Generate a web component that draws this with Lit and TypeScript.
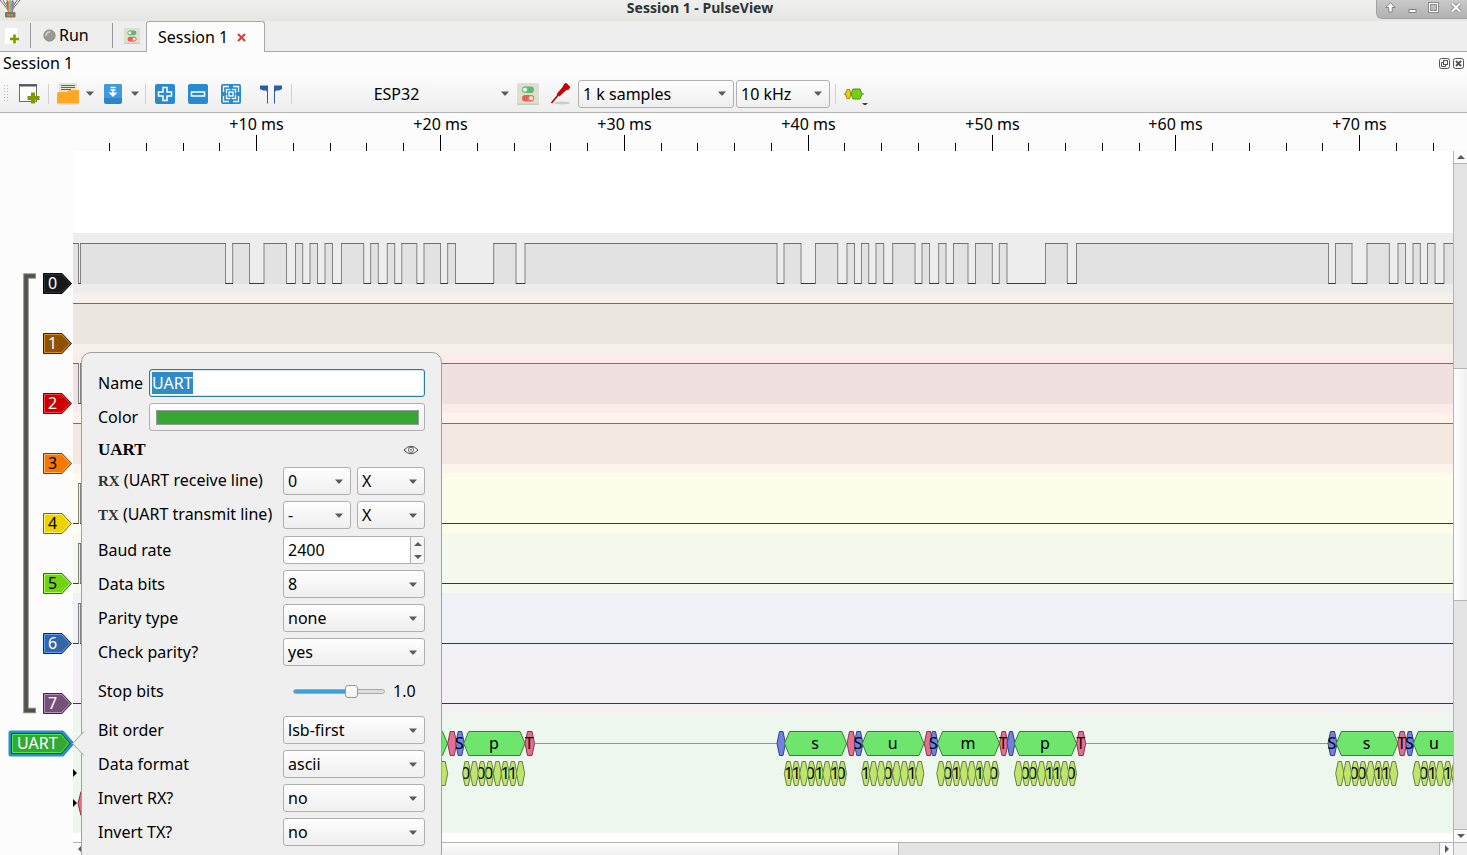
import { LitElement, html, svg, css } from "lit";
import { customElement } from "lit/decorators.js";

const HEADER_WIDTH = 73;
const SCENE_TOP = 151;

type Channel = {
  name: string;
  color: string;
  edge: string;
  light: string;
  text: string;
  start: number;
  edges: number[];
};

// Sample positions at which channel 0 toggles, beginning high.
const UART_EDGES = [
  78.5, 80.5,
  225.5, 232.7, 249.5, 264, 286.5, 295.5, 302.7, 310, 317.5, 325, 332.5, 341.5, 363.7, 370.7, 378.3, 387.3, 394.7,
  401.8, 416.8, 424, 440.5, 447.7, 455.5, 493.7, 516, 525,
  777, 784, 801, 815.5, 837.7, 847, 854.5, 861.5, 868.7, 876, 883.7, 892.7, 915, 922, 929.5, 938.7, 946, 953.5, 968,
  975.5, 992.3, 999.3, 1007, 1045.5, 1067.3, 1076.5,
  1328.5, 1335.5, 1352, 1367, 1389.3, 1398, 1405.5, 1413, 1420.3, 1427.5, 1435, 1444,
];
const GLITCH = [78.5, 80.5];

const CHANNELS: Channel[] = [
  { name: "0", color: "#16191a", edge: "#000000", light: "#2e3436", text: "#fff", start: 1, edges: UART_EDGES },
  { name: "1", color: "#8f5202", edge: "#3c2200", light: "#e08a1a", text: "#fff", start: 1, edges: [] },
  { name: "2", color: "#cc0000", edge: "#6a0000", light: "#ff4040", text: "#fff", start: 1, edges: GLITCH },
  { name: "3", color: "#f57900", edge: "#7a3c00", light: "#ffb066", text: "#000", start: 1, edges: [] },
  { name: "4", color: "#edd400", edge: "#766a00", light: "#fff27a", text: "#000", start: 0, edges: GLITCH },
  { name: "5", color: "#73d216", edge: "#39690b", light: "#a8ff55", text: "#000", start: 0, edges: GLITCH },
  { name: "6", color: "#3465a4", edge: "#152a48", light: "#5aa0ff", text: "#fff", start: 0, edges: GLITCH },
  { name: "7", color: "#75507b", edge: "#3a283d", light: "#b98cc0", text: "#fff", start: 0, edges: [] },
];

type Ann = [number, number, "start" | "data" | "stop", string];
const FRAMES: Ann[] = [
  [386, 447.5, "data", ""],
  [447.7, 456.7, "stop", ""], [455.7, 464.3, "start", "S"], [463.7, 525, "data", "p"], [525, 534.5, "stop", "T"],
  [777, 785.5, "start", ""], [784.5, 846.7, "data", "s"], [847, 855.7, "stop", ""], [854.3, 863, "start", "S"],
  [862.3, 924, "data", "u"], [924.3, 933, "stop", ""], [929.8, 938, "start", "S"], [937.5, 999.5, "data", "m"],
  [999.5, 1008, "stop", "T"], [1007, 1015, "start", ""], [1014.3, 1076.5, "data", "p"], [1076.5, 1085.7, "stop", "T"],
  [1328, 1337, "start", "S"], [1336.3, 1398, "data", "s"], [1397.7, 1406.7, "stop", "T"], [1405.7, 1414, "start", "S"],
  [1413.3, 1475, "data", ""],
];
const FILL = { start: "#6e82e4", data: "#6ee66e", stop: "#e66e96" };
const STROKE = { start: "#37417a", data: "#378037", stop: "#80374b" };

const BITS: [number, string][] = [
  [385.5, "        "],
  [462.5, "0 00 11 "],
  [784.3, "11 01 10"],
  [861.7, "1  0  1 "],
  [936.8, " 01  1 0"],
  [1014.3, " 00 11 0"],
  [1335.7, "  00 11 "],
  [1412.8, " 01 1   "],
];

const hex = (x0: number, x1: number, y: number, tip: number) =>
  `${x0},${y} ${x0 + tip},${y - 12} ${x1 - tip},${y - 12} ${x1},${y} ${x1 - tip},${y + 12} ${x0 + tip},${y + 12}`;

const caret = html`<svg class="caret" width="8" height="5" viewBox="0 0 8 5" aria-hidden="true"><path d="M0 .5h8L4.5 4.5h-1z" fill="#5a5a5a"/></svg>`;

const configIcon = (size: number) => html`<svg width=${size} height=${size} viewBox="0 0 22 22" aria-hidden="true">
  <rect width="22" height="22" rx="1.5" fill="#dfdfd0"/><rect y="20.500" width="22" height="1.500" fill="#cbcbbb"/>
  <rect x="5" y="3.500" width="12" height="6.500" rx="3.200" fill="#5fb878"/><circle cx="8" cy="6.700" r="2.600" fill="#f3f3ec" stroke="#5fb878"/>
  <rect x="5" y="12" width="12" height="6.500" rx="3.200" fill="#ef5f55"/><circle cx="14" cy="15.200" r="2.600" fill="#f3f3ec" stroke="#ef5f55"/>
</svg>`;

@customElement("drop-down")
class DropDown extends LitElement {
  static properties = { label: {}, value: {} };
  declare label: string;
  declare value: string;
  static styles = css`
    :host { display: block; }
    .box { display: grid; align-items: center; }
    select, .caret { grid-area: 1 / 1; }
    select {
      appearance: none; width: 100%; height: 28px; margin: 0; padding: 0 16px 0 4px;
      font: 16px/22px "Noto Sans", sans-serif; color: #000;
      border: 1px solid #b0b0b0; border-radius: 3px;
      background: linear-gradient(#fefefe, #efefef); outline: none;
    }
    .caret { justify-self: end; margin-right: 8px; pointer-events: none; }
  `;
  render() {
    return html`<div class="box"><select aria-label=${this.label}><option>${this.value}</option></select>${caret}</div>`;
  }
}

@customElement("trace-view")
class TraceView extends LitElement {
  static styles = css`
    :host { display: block; overflow: hidden; background: #fff; padding-top: 82px; }
    .lane { height: 60px; }
    .decoder { height: 120px; background: #eef7ee; }
    svg { display: block; width: 100%; height: 100%; }
    text { font: 16px "Noto Sans", sans-serif; text-anchor: middle; }
  `;

  private lane(c: Channel) {
    const stops = [HEADER_WIDTH, ...c.edges, 4000];
    return html`<div class="lane" style="background:${c.color}14"><svg aria-hidden="true"><g transform="translate(${-HEADER_WIDTH},0)">
      ${stops.slice(1).map((x1, i) => {
        const x0 = stops[i];
        const high = (i % 2 === 0) === (c.start === 1);
        return high
          ? svg`<rect x=${x0} y="10" width=${x1 - x0} height="41" fill="#000" fill-opacity=".045"/>`
          : null;
      })}
      ${c.edges.map((x) => svg`<path d="M${x} 10V50" stroke="#828282"/>`)}
      ${stops.slice(1).map((x1, i) => {
        const high = (i % 2 === 0) === (c.start === 1);
        return svg`<path d=${`M${stops[i] - 0.3} ${high ? 10.5 : 50.5}H${x1 + 0.3}`} stroke=${high ? "#00c000" : "#c00000"}/>`;
      })}
    </g></svg></div>`;
  }

  private bit(x: number, ch: string) {
    if (ch === " ") return null;
    return svg`<svg x=${x + 1} y="46" width="7" height="28" overflow="hidden"><text x=${ch === "0" ? 2 : 3.2} y="20">${ch}</text></svg>`;
  }

  render() {
    return html`
      ${CHANNELS.map((c) => this.lane(c))}
      <div class="decoder"><svg role="img" aria-label="UART decoder"><g transform="translate(${-HEADER_WIDTH},0)">
        <path d="M535 30.500H777M1086 30.500H1328" stroke="#909890"/>
        <path d="M73 56v8l4-4zM73 86v8l4-4z" fill="#000"/>
        <polygon points=${hex(78, 86, 90.5, 3)} fill="#e66e7e" stroke="#80373f"/>
        ${FRAMES.map(([a, b, k, t]) => svg`<polygon points=${hex(a, b, 30.5, k === "data" ? 5 : 2.5)} fill=${FILL[k]} stroke=${STROKE[k]}/>
          ${t ? svg`<text x=${(a + b) / 2 - 0.5} y="36">${t}</text>` : null}`)}
        <text x="1434" y="36">u</text>
        ${BITS.map(([x, bits]) => svg`
          ${[...bits].map((_, i) => svg`<polygon points=${hex(x + i * 7.7, x + i * 7.7 + 8.3, 60.5, 2.5)} fill="#bee66e" stroke="#6a803e"/>`)}
          ${[...bits].map((ch, i) => this.bit(x + i * 7.7, ch))}`)}
      </g></svg></div>`;
  }
}

@customElement("trace-headers")
class TraceHeaders extends LitElement {
  static styles = css`
    :host { display: block; overflow: hidden; background: #fcfcfc; }
    svg { display: block; width: 100%; height: 704px; }
    text { font: 16px "Noto Sans", sans-serif; }
  `;
  render() {
    return html`<svg role="img" aria-label="Channels"><g transform="translate(0,${-SCENE_TOP})">
      <path d="M36 276H26V710.500H36" fill="none" stroke="#8c8e89" stroke-width="5.600"/>
      <path d="M35 276H26V710.500H35" fill="none" stroke="#50524e" stroke-width="3.600"/>
      ${CHANNELS.map((c, i) => {
        const y = 283.5 + i * 60;
        return svg`<path d="M43.500 ${y - 10}H62L71.500 ${y}L62 ${y + 10}H43.500Z" fill=${c.color} stroke=${c.edge}/>
          <path d="M44.500 ${y - 9}H61.500L70 ${y}L61.500 ${y + 9}H44.500Z" fill="none" stroke=${c.light}/>
          <text x="48" y=${y + 5.5} fill=${c.text}>${c.name}</text>`;
      })}
      <path d="M10.500 732.500H62.500L72 743.500L62.500 754.500H10.500Z" fill="#34a832" stroke="#308cc6" stroke-width="4" stroke-linejoin="round"/>
      <path d="M11.500 733.500H61.500L70 743.500L61.500 753.500H11.500Z" fill="#34a832" stroke="#145014"/>
      <path d="M12.500 734.500H61L68.500 743.500L61 752.500H12.500Z" fill="none" stroke="#46f046"/>
      <text x="17" y="749" fill="#fff">UART</text>
    </g></svg>`;
  }
}

@customElement("decoder-popup")
class DecoderPopup extends LitElement {
  static styles = css`
    :host {
      display: block; box-sizing: border-box; width: 361px; padding: 16px; background: #efefef;
      border: 1px solid #a0a0a0; border-radius: 10px; font: 16px/22px "Noto Sans", sans-serif; color: #000;
    }
    .form, .group { display: flex; flex-direction: column; gap: 6px; }
    .form { gap: 7px; }
    .group.pins { margin-top: -1px; }
    .row { display: grid; grid-template-columns: 179px 142px; column-gap: 6px; align-items: center; height: 28px; }
    .row.top { grid-template-columns: 45px 1fr; }
    .row.pin { grid-template-columns: 179px 68px 68px; }
    .row.slide { height: 38px; }
    .label { white-space: nowrap; }
    .pin .label { padding-bottom: 2px; }
    .head { display: flex; justify-content: space-between; align-items: center; height: 23px; padding-right: 6px; }
    h2 { margin: 0; font: bold 17px/22px "Liberation Serif", serif; }
    b { font: bold 15px/20px "Liberation Serif", serif; color: #333; }
    .name {
      box-sizing: border-box; width: 100%; height: 28px; padding: 0 2px; font: inherit; color: #000; background: #fff;
      border: 1px solid #2a79a8; border-radius: 3px; outline: none; box-shadow: inset 0 0 0 1px #d5e8f4;
    }
    .name::selection { background: #308cc6; color: #fff; }
    .color {
      box-sizing: border-box; width: 100%; height: 28px; padding: 6px 5px 6px 6px; border: 1px solid #b0b0b0; border-radius: 3px;
      background: linear-gradient(#fefefe, #efefef);
    }
    .swatch { display: block; height: 13px; border: 1px solid #999; background: #34a832; }
    .eye { display: flex; padding: 0; border: 0; background: none; }
    .spin { display: grid; grid-template-columns: 1fr 14px; height: 26px; border: 1px solid #b0b0b0; border-radius: 3px; background: #fff; overflow: hidden; }
    .spin input { min-width: 0; width: 100%; box-sizing: border-box; padding: 0 4px; border: 0; outline: none; font: inherit; background: none; }
    .steps { display: grid; grid-template-rows: 1fr 1fr; border-left: 1px solid #b0b0b0; background: #f6f6f6; }
    .steps button { display: grid; place-items: center; padding: 0; border: 0; background: none; }
    .slider { display: flex; align-items: center; gap: 8px; padding-left: 10px; }
    input[type="range"] { appearance: none; width: 92px; height: 14px; margin: 0; background: none; }
    input[type="range"]::-webkit-slider-runnable-track {
      height: 5px; border: 1px solid #a8a8a8; border-radius: 3px; box-sizing: border-box;
      background: linear-gradient(90deg, #3d9fdc 66%, #dcdcdc 66%) border-box;
    }
    input[type="range"]::-webkit-slider-thumb {
      appearance: none; box-sizing: border-box; width: 13px; height: 13px; margin-top: -5px; border: 1px solid #999; border-radius: 3px;
      background: linear-gradient(#fff, #f2f2f2);
    }
  `;

  firstUpdated() {
    const name = this.renderRoot.querySelector<HTMLInputElement>(".name")!;
    name.focus({ preventScroll: true });
    name.select();
  }

  private option(label: string, value: string) {
    return html`<div class="row"><span class="label">${label}</span><drop-down .label=${label} .value=${value}></drop-down></div>`;
  }
  private pin(id: string, desc: string, value: string) {
    return html`<div class="row pin"><span class="label"><b>${id}</b> (${desc})</span>
      <drop-down .label=${desc} .value=${value}></drop-down><drop-down .label=${`${id} initial state`} .value=${"X"}></drop-down></div>`;
  }

  render() {
    return html`<div class="form">
      <div class="group">
        <div class="row top"><label for="name">Name</label><input id="name" class="name" value="UART"></div>
        <div class="row top"><label for="color">Color</label><button id="color" class="color"><span class="swatch"></span></button></div>
      </div>
      <div class="head"><h2>UART</h2>
        <button class="eye" aria-label="Show decoder"><svg width="16" height="10" viewBox="0 0 16 10"><path d="M1 5Q8-2.500 15 5Q8 12.500 1 5z" fill="#f8f8f8" stroke="#444"/><circle cx="8" cy="4.800" r="2.600" fill="none" stroke="#666"/><circle cx="8" cy="4.800" r=".8" fill="#222"/></svg></button></div>
      <div class="group pins">
        ${this.pin("RX", "UART receive line", "0")}
        ${this.pin("TX", "UART transmit line", "-")}
      </div>
      <div class="group">
        <div class="row"><label for="baud">Baud rate</label><div class="spin"><input id="baud" value="2400">
          <span class="steps"><button aria-label="Increase"><svg width="8" height="4" viewBox="0 0 8 4"><path d="M0 4h8L4 0z" fill="#5a5a5a"/></svg></button>
          <button aria-label="Decrease"><svg width="8" height="4" viewBox="0 0 8 4"><path d="M0 0h8L4 4z" fill="#5a5a5a"/></svg></button></span></div></div>
        ${this.option("Data bits", "8")}
        ${this.option("Parity type", "none")}
        ${this.option("Check parity?", "yes")}
        <div class="row slide"><label for="stop">Stop bits</label><div class="slider"><input id="stop" type="range" min="0" max="1.5" step="0.5" value="1"><span>1.0</span></div></div>
        ${this.option("Bit order", "lsb-first")}
        ${this.option("Data format", "ascii")}
        ${this.option("Invert RX?", "no")}
        ${this.option("Invert TX?", "no")}
      </div>
    </div>`;
  }
}

@customElement("app-root")
class AppRoot extends LitElement {
  static styles = css`
    :host { display: flex; flex-direction: column; height: 100vh; overflow: hidden; background: #fcfcfc; color: #000; font: 16px/22px "Noto Sans", sans-serif; }
    button { font: inherit; color: inherit; padding: 0; border: 0; background: none; display: flex; align-items: center; }
    svg { display: block; flex: none; }
    .title { display: grid; grid-template-columns: 91px 1fr 91px; height: 21px; flex: none; background: linear-gradient(#f0f0ee, #e5e5e2); }
    .logo { margin-left: -1px; }
    h1 { margin: 0; padding-right: 67px; font: bold 14px/16px "Noto Sans", sans-serif; color: #2e3436; text-align: center; }
    .controls { display: flex; justify-content: space-between; align-items: center; box-sizing: border-box; height: 19px; padding: 0 5px 4px 8px; background: linear-gradient(#c9c9c9, #b2b2b2); border: 1px solid #a2a2a2; border-width: 0 0 1px 1px; border-radius: 0 0 0 6px; }
    .tabs { display: flex; align-items: stretch; height: 30px; flex: none; background: #eee; border-bottom: 1px solid #a9a9a9; }
    .tabs > * { box-sizing: border-box; }
    .new { width: 30px; padding-left: 5px; }
    .rule { width: 1px; margin: 2px 0 3px; background: #999; }
    .run { width: 81px; padding-left: 12px; gap: 3px; line-height: 20px; padding-bottom: 2px; }
    .conf { width: 33px; padding-left: 11px; }
    .tab { display: flex; align-items: center; gap: 9px; width: 119px; height: 31px; padding-left: 11px; border: 1px solid #a9a9a9; border-bottom: 0; border-radius: 3px 3px 0 0; background: #fcfcfc; }
    .dock { display: flex; align-items: center; justify-content: space-between; box-sizing: border-box; height: 23px; flex: none; padding: 0 3px 1px; }
    .dock div { display: flex; gap: 3px; }
    .toolbar { display: flex; align-items: center; height: 37px; flex: none; background: linear-gradient(#fcfcfc, #eee); border-bottom: 1px solid #b4b4b4; }
    .sep { width: 1px; height: 20px; background: #d0d0d0; flex: none; }
    .tool { flex: none; justify-content: center; }
    .new-view { padding-right: 8px; }
    .files { display: flex; align-items: center; padding: 0 6px 0 8px; }
    .zooms { display: flex; align-items: center; gap: 13px; padding: 0 9px; }
    .open-menu { width: 21px; height: 22px; margin-right: 4px; }
    .save-menu { height: 22px; padding-left: 9px; }
    .cursors { margin-left: 6px; }
    .grip { padding: 0 10px 0 4px; }
    .device { width: 217px; }
    .device span { flex: 1; text-align: center; }
    .rates { display: flex; gap: 2px; padding: 0 5px 0 7px; }
    .samples { width: 156px; }
    .rate { width: 94px; }
    .config { padding-left: 8px; }
    .probe { padding-left: 11px; }
    .ruler { height: 38px; flex: none; }
    .ruler svg { width: 100%; height: 38px; }
    .ruler text { font: 16px "Noto Sans", sans-serif; text-anchor: middle; }
    .view { position: relative; display: grid; grid-template-columns: 73px 1fr 14px; grid-template-rows: 1fr 13px; flex: 1; min-height: 0; }
    trace-headers { grid-row: 1 / 3; }
    trace-view { min-height: 0; min-width: 0; }
    .vbar { display: grid; grid-template-rows: 13px 204fr 232fr 228fr 13px; border-left: 1px solid #b4b4b4; background: #e4e4e4; }
    .hbar { display: grid; grid-template-columns: 14px 812fr 540fr 14px; border-top: 1px solid #b4b4b4; background: #e4e4e4; }
    .end { display: grid; place-items: center; background: #fafafa; }
    .vbar .end { border-bottom: 1px solid #b4b4b4; }
    .vbar .thumb { grid-row: 3; border: 1px solid #b4b4b4; border-width: 1px 0; background: linear-gradient(90deg, #fefefe, #f0f0f0); }
    .vbar .down { grid-row: 5; border: 0; border-top: 1px solid #b4b4b4; }
    .hbar .thumb { border-right: 1px solid #b4b4b4; background: linear-gradient(#fefefe, #f0f0f0); }
    .hbar .right { grid-column: 4; border-left: 1px solid #b4b4b4; }
    .corner { background: #eee; border: 1px solid #b4b4b4; border-width: 1px 0 0 1px; }
    .popup { position: absolute; left: 81px; top: 201px; }
    .pointer { position: absolute; left: 72px; top: 580px; }
  `;

  private onResize = () => this.requestUpdate();
  connectedCallback() {
    super.connectedCallback();
    window.addEventListener("resize", this.onResize);
  }
  disconnectedCallback() {
    window.removeEventListener("resize", this.onResize);
    super.disconnectedCallback();
  }

  private ticks() {
    const out = [];
    // Ticks stop at the left edge of the vertical scroll bar.
    for (let k = 1; 72.3 + 36.77 * k < window.innerWidth - 14; k++) {
      const x = Math.round(72.3 + 36.77 * k) + 0.5;
      const major = k % 5 === 0;
      out.push(svg`<path d="M${x} ${major ? 22 : 30}V38" stroke="#000"/>`);
      if (major) out.push(svg`<text x=${x} y="17">+${k * 2} ms</text>`);
    }
    return out;
  }

  render() {
    return html`
      <header class="title">
        <svg class="logo" width="22" height="19" viewBox="0 0 22 19" aria-hidden="true">
          <path d="M1 0L9 10M4 0L10 10M21 0L13 10M18 0L12 10M8 0L10.500 8M14 0L12 8" stroke="#77736a" fill="none"/>
          <path d="M7 2l2 11h2V1z" fill="#b86a5a"/><path d="M9.500 1v12h1.500V0z" fill="#f0a050"/><path d="M11 0v13h1.500L13 1z" fill="#7fc070"/><path d="M13 1l-.5 12H14l1.500-11z" fill="#9a78c8"/>
          <rect x="6" y="12" width="10.500" height="5.500" rx="1" fill="#85765f"/><path d="M8 15h6" stroke="#b0a58f"/>
        </svg>
        <h1>Session 1 - PulseView</h1>
        <div class="controls">
          <button aria-label="Shade"><svg width="11" height="11" viewBox="0 0 11 11"><path d="M5.500 .8L10.200 5.500H7.200V10H3.800V5.500H.8z" fill="#fff" stroke="#808080"/></svg></button>
          <button aria-label="Minimize"><svg width="11" height="11" viewBox="0 0 11 11"><rect x="2" y="7.500" width="7" height="3" fill="#fff" stroke="#808080"/></svg></button>
          <button aria-label="Maximize"><svg width="11" height="11" viewBox="0 0 11 11"><rect x="1.500" y="1.500" width="8" height="8" fill="none" stroke="#808080" stroke-width="3"/><rect x="1.500" y="1.500" width="8" height="8" fill="none" stroke="#fff" stroke-width="1.200"/></svg></button>
          <button aria-label="Close"><svg width="12" height="11" viewBox="0 0 12 11"><path d="M2 1.500l8 8M10 1.500l-8 8" stroke="#808080" stroke-width="3.800"/><path d="M2 1.500l8 8M10 1.500l-8 8" stroke="#fff" stroke-width="2.200"/></svg></button>
        </div>
      </header>
      <nav class="tabs">
        <button class="new" aria-label="New session"><svg width="15" height="17" viewBox="0 0 15 17"><path d="M0 0h12v16H0z" fill="#fff"/><path d="M9.500 6.500v9M5 11h9" stroke="#7f9a00" stroke-width="2.600"/></svg></button>
        <span class="rule"></span>
        <button class="run"><svg width="13" height="13" viewBox="0 0 13 13"><circle cx="6.500" cy="6.500" r="5.600" fill="#9b9b96" stroke="#85857f"/><path d="M3 7a3.500 3.500 0 0 1 4-4" stroke="#d8d8d4" stroke-width="1.600" fill="none"/></svg>Run</button>
        <span class="rule"></span>
        <button class="conf" aria-label="Settings">${configIcon(16)}</button>
        <div class="tab">Session 1<button aria-label="Close tab"><svg width="9" height="9" viewBox="0 0 9 9"><path d="M1 1l7 7M8 1l-7 7" stroke="#e03a34" stroke-width="2"/></svg></button></div>
      </nav>
      <div class="dock"><span>Session 1</span><div>
        <button aria-label="Float"><svg width="11" height="11" viewBox="0 0 11 11" fill="none" stroke="#555"><rect x=".5" y=".5" width="10" height="10" rx="2"/><rect x="4.500" y="2.500" width="4" height="4"/><path d="M4.500 4.500h-2v4h4v-2"/></svg></button>
        <button aria-label="Close dock"><svg width="11" height="11" viewBox="0 0 11 11" fill="none" stroke="#555"><rect x=".5" y=".5" width="10" height="10" rx="2"/><path d="M3 3l5 5M8 3l-5 5" stroke-width="2"/></svg></button>
      </div></div>
      <div class="toolbar">
        <svg class="grip" width="5" height="18" viewBox="0 0 5 18"><path d="M.5 0v18M3.500 0v18" stroke="#bbb" stroke-dasharray="1 2"/></svg>
        <button class="tool new-view" aria-label="New view"><svg width="21" height="20" viewBox="0 0 21 20"><rect x=".5" y=".5" width="17" height="17" fill="#fff" stroke="#6e6e69"/><path d="M0 1.500h18" stroke="#55575a" stroke-width="2"/><path d="M14 8.500v11M8.500 14h12" stroke="#7f9a00" stroke-width="4"/></svg></button>
        <span class="sep"></span>
        <div class="files">
          <button class="tool" aria-label="Open"><svg width="22" height="22" viewBox="0 0 22 22"><rect x="2" y="0" width="18" height="11" fill="#e4e4d4"/><path d="M4 2.500h14M4 4.500h14M4 6.500h10" stroke="#66665e"/><path d="M0 10.500l1-1.500h9l2-2h10v13.500H0z" fill="#ffa726"/><path d="M1 21h20" stroke="#c9c9c9"/></svg></button>
          <button class="tool open-menu" aria-label="Open menu">${caret}</button>
          <button class="tool" aria-label="Save"><svg width="18" height="20" viewBox="0 0 18 20"><rect width="18" height="20" rx="2" fill="#2d86cc"/><path d="M0 14V2Q0 0 2 0h14q2 0 2 2v12z" fill="#3f9ade"/><path d="M6.500 3.500h5M6.500 6h5M9 6.500v3" stroke="#fff" stroke-width="1.500"/><path d="M4.500 8.500h9L9 13z" fill="#fff"/></svg></button>
          <button class="tool save-menu" aria-label="Save menu">${caret}</button>
        </div>
        <span class="sep"></span>
        <div class="zooms">
          <button class="tool" aria-label="Zoom in"><svg width="20" height="20" viewBox="0 0 20 20"><rect width="20" height="20" rx="2" fill="#268bd2"/><path d="M8 3.500h4v4.500h4.500v4H12v4.500H8V12H3.500V8H8z" fill="none" stroke="#fff" stroke-width="1.500"/></svg></button>
          <button class="tool" aria-label="Zoom out"><svg width="20" height="20" viewBox="0 0 20 20"><rect width="20" height="20" rx="2" fill="#268bd2"/><rect x="3.500" y="8" width="13" height="4" fill="none" stroke="#fff" stroke-width="1.500"/></svg></button>
          <button class="tool" aria-label="Zoom to fit"><svg width="20" height="20" viewBox="0 0 20 20"><rect width="20" height="20" rx="2" fill="#268bd2"/><g fill="none" stroke="#fff" stroke-width="1.300"><path d="M2.500 8V2.500H8M12 2.500h5.500V8M17.500 12v5.500H12M8 17.500H2.500V12"/><rect x="5.500" y="5.500" width="9" height="9"/><rect x="8" y="8" width="4" height="4"/></g><path d="M10 4v3M10 13v3M4 10h3M13 10h3" stroke="#268bd2" stroke-width="1.500"/></svg></button>
          <button class="tool cursors" aria-label="Show cursors"><svg width="22" height="20" viewBox="0 0 22 20"><path d="M0 1.500h8v18H7V8L6 6.500H3L0 5z" fill="#2a5ca8"/><path d="M22 1.500h-8v18h1V8l1-1.500h3L22 5z" fill="#2a5ca8"/></svg></button>
        </div>
        <span class="sep"></span>
        <button class="device"><span>ESP32</span>${caret}</button>
        <button class="tool config" aria-label="Configure device">${configIcon(22)}</button>
        <button class="tool probe" aria-label="Channels"><svg width="21" height="22" viewBox="0 0 21 22"><ellipse cx="12" cy="20" rx="8" ry="1.500" fill="#ccc"/><path d="M1.500 20L9 11" stroke="#b00000" stroke-width="1.600"/><path d="M7 11l6-7 1-2.500L16 0l4 4-1.500 2.500L16 7l-6.500 6z" fill="#cc0000" stroke="#900" stroke-width=".6"/></svg></button>
        <div class="rates">
          <drop-down class="samples" .label=${"Sample count"} .value=${"1 k samples"}></drop-down>
          <drop-down class="rate" .label=${"Sample rate"} .value=${"10 kHz"}></drop-down>
        </div>
        <span class="sep"></span>
        <button class="tool" aria-label="Add decoder"><svg width="33" height="22" viewBox="-8 0 33 22"><path d="M0 11h20" stroke="#667"/><path d="M1.500 11l1.500-4.500h2.500L7 11l-1.500 4.500H3z" fill="#edd400" stroke="#a08500"/><path d="M7 11l2-5h7l2 5-2 5H9z" fill="#73d216" stroke="#4e9a06"/><path d="M18 20h6l-3 3z" fill="#444"/></svg></button>
      </div>
      <div class="ruler"><svg role="img" aria-label="Time ruler">${this.ticks()}</svg></div>
      <main class="view">
        <trace-headers></trace-headers>
        <trace-view></trace-view>
        <div class="vbar">
          <span class="end"><svg width="8" height="4" viewBox="0 0 8 4"><path d="M0 4h8L4 0z" fill="#5a5a5a"/></svg></span>
          <span class="thumb"></span>
          <span class="end down"><svg width="8" height="4" viewBox="0 0 8 4"><path d="M0 0h8L4 4z" fill="#5a5a5a"/></svg></span>
        </div>
        <div class="hbar">
          <span class="end"><svg width="4" height="8" viewBox="0 0 4 8"><path d="M4 0v8L0 4z" fill="#5a5a5a"/></svg></span>
          <span class="thumb"></span>
          <span class="end right"><svg width="4" height="8" viewBox="0 0 4 8"><path d="M0 0v8l4-4z" fill="#5a5a5a"/></svg></span>
        </div>
        <span class="corner"></span>
        <decoder-popup class="popup"></decoder-popup>
        <svg class="pointer" width="13" height="25" viewBox="0 0 13 25" aria-hidden="true"><path d="M12 0L.5 12.500 12 25z" fill="#efefef"/><path d="M12 .5L.5 12.500 12 24.500" fill="none" stroke="#a0a0a0"/></svg>
      </main>`;
  }
}
